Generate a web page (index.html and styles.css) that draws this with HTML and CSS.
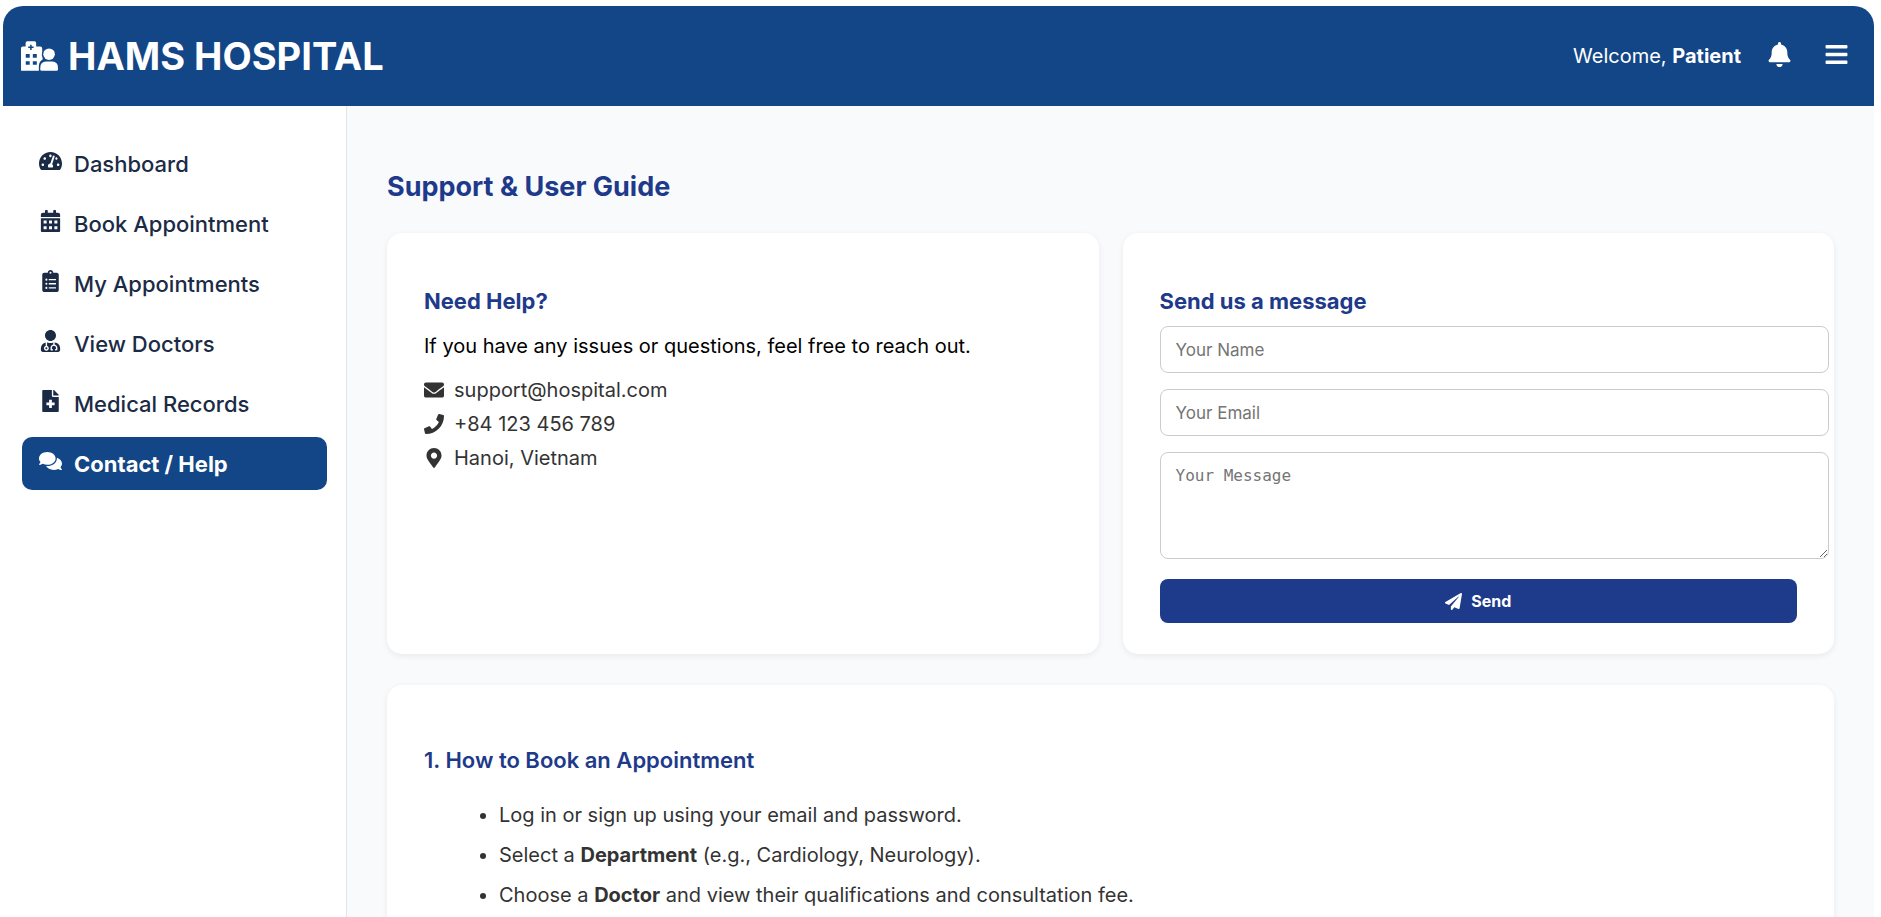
FILE: index.html
```html
<!DOCTYPE html>
<html lang="en">
<head>
<meta charset="utf-8">
<title>HAMS Hospital - Support</title>
<link rel="stylesheet" href="styles.css">
</head>
<body>
<header class="topbar">
  <h1 class="brand">
    <svg class="brand-icon" viewBox="0 0 576 460" aria-hidden="true"><path fill-rule="evenodd" d="M100 0H210Q236 0 236 26V84H300Q330 84 330 112V160Q312 220 340 280Q282 310 278 384V460H14Q0 460 0 446V108Q0 84 28 84H72V26Q72 0 100 0zM142 54V84H112V106H142V136H166V106H196V84H166V54zM74 200V258H136V200zM184 200V258H246V200zM74 310V368H136V310zM184 310V368H246V310z"/><circle cx="437" cy="202" r="90"/><path d="M390 316H486Q576 322 576 412V436Q576 460 552 460H324Q300 460 300 436V412Q300 322 390 316z"/></svg>
    <span>HAMS HOSPITAL</span>
  </h1>
  <div class="top-actions">
    <span class="welcome">Welcome, <strong>Patient</strong></span>
    <button class="icon-button" type="button" aria-label="Notifications"><svg class="top-icon" viewBox="0 0 448 512"><path d="M224 512c35.320 0 63.970-28.650 63.970-64H160.030c0 35.350 28.650 64 63.970 64zm215.390-149.710c-19.320-20.760-55.470-51.990-55.470-154.290 0-77.700-54.480-139.900-127.940-155.160V32c0-17.670-14.320-32-31.980-32s-31.980 14.330-31.980 32v20.840C118.560 68.100 64.080 130.300 64.080 208c0 102.300-36.150 133.530-55.470 154.290-6 6.450-8.660 14.160-8.610 21.710.110 16.400 12.980 32 32.100 32h383.800c19.120 0 32-15.600 32.100-32 .050-7.550-2.610-15.270-8.610-21.710z"/></svg></button>
    <button class="icon-button" type="button" aria-label="Menu"><svg class="top-icon" viewBox="0 0 448 512"><path d="M16 132h416c8.837 0 16-7.163 16-16V76c0-8.837-7.163-16-16-16H16C7.163 60 0 67.163 0 76v40c0 8.837 7.163 16 16 16zm0 160h416c8.837 0 16-7.163 16-16v-40c0-8.837-7.163-16-16-16H16c-8.837 0-16 7.163-16 16v40c0 8.837 7.163 16 16 16zm0 160h416c8.837 0 16-7.163 16-16v-40c0-8.837-7.163-16-16-16H16c-8.837 0-16 7.163-16 16v40c0 8.837 7.163 16 16 16z"/></svg></button>
  </div>
</header>
<div class="layout">
  <nav class="sidebar" aria-label="Main">
    <a class="nav-link" href="#"><svg class="nav-icon" viewBox="0 0 576 512" aria-hidden="true"><path d="M288 32C128.940 32 0 160.940 0 320c0 52.800 14.250 102.260 39.060 144.800 5.610 9.620 16.300 15.200 27.440 15.200h443c11.140 0 21.830-5.580 27.440-15.200C561.750 422.260 576 372.800 576 320c0-159.060-128.940-288-288-288zm0 64c14.710 0 26.580 10.130 30.320 23.650-1.110 2.260-2.640 4.230-3.450 6.670l-9.220 27.670c-5.130 3.490-10.970 6.010-17.640 6.010-17.670 0-32-14.330-32-32S270.330 96 288 96zM96 384c-17.670 0-32-14.330-32-32s14.330-32 32-32 32 14.330 32 32-14.330 32-32 32zm48-160c-17.670 0-32-14.330-32-32s14.330-32 32-32 32 14.330 32 32-14.330 32-32 32zm246.770-72.410l-61.330 184C343.130 347.330 352 364.540 352 384c0 11.720-3.380 22.550-8.880 32H232.880c-5.500-9.450-8.880-20.280-8.880-32 0-33.940 26.500-61.430 59.900-63.590l61.340-184.010c4.170-12.560 17.730-19.450 30.360-15.170 12.570 4.190 19.350 17.790 15.170 30.360zm14.660 57.200l15.520-46.550c3.470-1.290 7.130-2.230 11.050-2.230 17.670 0 32 14.330 32 32s-14.330 32-32 32c-11.380-.01-20.890-6.280-26.570-15.220zM480 384c-17.670 0-32-14.330-32-32s14.330-32 32-32 32 14.330 32 32-14.330 32-32 32z"/></svg>Dashboard</a>
    <a class="nav-link" href="#"><svg class="nav-icon" viewBox="0 0 448 512" aria-hidden="true"><path fill-rule="evenodd" d="M0 192H448V488Q448 512 424 512H24Q0 512 0 488zM64 246V314H134V246zM189 246V314H259V246zM314 246V314H384V246zM64 380V448H134V380zM189 380V448H259V380zM314 380V448H384V380zM400 64h-48V16c0-8.800-7.200-16-16-16h-32c-8.800 0-16 7.200-16 16v48H160V16c0-8.800-7.200-16-16-16h-32c-8.800 0-16 7.200-16 16v48H48C21.500 64 0 85.500 0 112v48h448v-48c0-26.500-21.500-48-48-48z"/></svg>Book Appointment</a>
    <a class="nav-link" href="#"><svg class="nav-icon" viewBox="0 0 384 512" aria-hidden="true"><path fill-rule="evenodd" d="M336 64H256C256 28.700 227.300 0 192 0S128 28.700 128 64H48C21.500 64 0 85.500 0 112V464C0 490.500 21.500 512 48 512H336C362.500 512 384 490.500 384 464V112C384 85.500 362.500 64 336 64zM192 40a24 24 0 1 1 0 48a24 24 0 1 1 0-48zM96 200a24 24 0 1 1 0 48a24 24 0 1 1 0-48zM96 296a24 24 0 1 1 0 48a24 24 0 1 1 0-48zM96 392a24 24 0 1 1 0 48a24 24 0 1 1 0-48zM152 208H320V240H152zM152 304H320V336H152zM152 400H320V432H152z"/></svg>My Appointments</a>
    <a class="nav-link" href="#"><svg class="nav-icon" viewBox="0 0 448 512" aria-hidden="true"><path d="M224 256c70.700 0 128-57.300 128-128S294.700 0 224 0 96 57.300 96 128s57.300 128 128 128zM104 424c0 13.300 10.700 24 24 24s24-10.700 24-24-10.700-24-24-24-24 10.700-24 24zm216-135.400v49c36.500 7.400 64 39.800 64 78.400v41.700c0 7.600-5.400 14.200-12.900 15.700l-32.200 6.400c-4.300.9-8.500-1.900-9.400-6.300l-3.100-15.700c-.9-4.300 1.900-8.600 6.300-9.400l19.300-3.900V416c0-62.800-96-65.100-96 1.900v26.700l19.300 3.900c4.300.9 7.100 5.100 6.300 9.400l-3.100 15.700c-.9 4.300-5.100 7.100-9.400 6.300l-31.200-4.200c-7.900-1.100-13.800-7.800-13.800-15.900V416c0-38.600 27.500-70.900 64-78.400v-45.200c-2.200.7-4.400 1.100-6.600 1.900-18 6.300-37.300 9.800-57.400 9.800s-39.400-3.500-57.400-9.800c-7.400-2.600-14.900-4.200-22.600-5.200v81.600c23.100 6.900 40 28.100 40 53.400 0 30.900-25.100 56-56 56s-56-25.100-56-56c0-25.300 16.900-46.500 40-53.400v-80.400C48.500 301 0 355.800 0 422.400v44.800C0 491.900 20.100 512 44.800 512h358.400c24.700 0 44.800-20.100 44.800-44.800v-44.800c0-72-56.800-130.300-128-133.800z"/></svg>View Doctors</a>
    <a class="nav-link" href="#"><svg class="nav-icon" viewBox="0 0 384 512" aria-hidden="true"><path d="M377 105L279.100 7c-4.500-4.500-10.600-7-17-7H256v128h128v-6.100c0-6.300-2.500-12.400-7-16.900zm-153 31V0H24C10.700 0 0 10.700 0 24v464c0 13.300 10.700 24 24 24h336c13.300 0 24-10.700 24-24V160H248c-13.200 0-24-10.800-24-24zm64 160v48c0 4.400-3.600 8-8 8h-56v56c0 4.400-3.600 8-8 8h-48c-4.400 0-8-3.600-8-8v-56h-56c-4.400 0-8-3.600-8-8v-48c0-4.400 3.600-8 8-8h56v-56c0-4.400 3.600-8 8-8h48c4.400 0 8 3.600 8 8v56h56c4.400 0 8 3.600 8 8z"/></svg>Medical Records</a>
    <a class="nav-link active" href="#" aria-current="page"><svg class="nav-icon" viewBox="0 0 576 512" aria-hidden="true"><path d="M416 192c0-88.400-93.100-160-208-160S0 103.600 0 192c0 34.300 14.100 65.900 38 92-13.400 30.200-35.500 54.200-35.800 54.500-2.200 2.300-2.800 5.700-1.500 8.700S4.800 352 8 352c36.600 0 66.900-12.300 88.700-25 32.200 15.700 70.300 25 111.300 25 114.900 0 208-71.600 208-160zm122 220c23.900-26 38-57.700 38-92 0-66.900-53.500-124.200-129.300-148.100.9 6.600 1.300 13.300 1.300 20.100 0 105.900-107.700 192-240 192-10.800 0-21.300-.8-31.700-1.900C207.800 439.600 281.800 480 368 480c41 0 79.100-9.200 111.300-25 21.800 12.700 52.100 25 88.700 25 3.200 0 6.100-1.900 7.300-4.800 1.300-2.900.7-6.300-1.500-8.700-.3-.3-22.400-24.200-35.800-54.500z"/></svg>Contact / Help</a>
  </nav>
  <main class="content">
    <h2 class="page-title">Support &amp; User Guide</h2>
    <div class="contact-grid">
      <section class="card">
        <h3 class="card-title">Need Help?</h3>
        <p class="intro">If you have any issues or questions, feel free to reach out.</p>
        <ul class="contact-list">
          <li class="contact-item"><svg class="contact-icon" viewBox="0 0 512 512" aria-hidden="true"><path d="M502.300 190.800c3.900-3.100 9.700-.2 9.700 4.700V400c0 26.500-21.500 48-48 48H48c-26.500 0-48-21.500-48-48V195.600c0-5 5.700-7.800 9.700-4.700 22.400 17.400 52.100 39.500 154.100 113.600 21.100 15.400 56.700 47.800 92.200 47.600 35.700.3 72-32.800 92.300-47.600 102-74.100 131.600-96.300 154-113.700zM256 320c23.200.4 56.600-29.200 73.400-41.400 132.700-96.300 142.800-104.700 173.400-128.700 5.800-4.500 9.200-11.500 9.200-18.900v-19c0-26.500-21.500-48-48-48H48c-26.500 0-48 21.500-48 48v19c0 7.400 3.400 14.300 9.200 18.900 30.600 23.900 40.700 32.400 173.400 128.700 16.800 12.200 50.200 41.800 73.400 41.400z"/></svg>support@hospital.com</li>
          <li class="contact-item"><svg class="contact-icon" viewBox="0 0 512 512" aria-hidden="true"><path d="M493.400 24.600l-104-24c-11.300-2.600-22.900 3.300-27.500 13.900l-48 112c-4.200 9.800-1.400 21.300 6.900 28l60.600 49.600c-36 76.700-98.900 140.500-177.200 177.200l-49.600-60.600c-6.800-8.300-18.200-11.100-28-6.900l-112 48C3.900 366.500-2 378.100.6 389.400l24 104C27.100 504.200 36.700 512 48 512c256.100 0 464-207.500 464-464 0-11.200-7.700-20.900-18.600-23.400z"/></svg>+84 123 456 789</li>
          <li class="contact-item"><svg class="contact-icon" viewBox="0 0 384 512" aria-hidden="true"><path d="M172.268 501.670C26.970 291.031 0 269.413 0 192 0 85.961 85.961 0 192 0s192 85.961 192 192c0 77.413-26.970 99.031-172.268 309.670-9.535 13.774-29.930 13.773-39.464 0zM192 272c44.183 0 80-35.817 80-80s-35.817-80-80-80-80 35.817-80 80 35.817 80 80 80z"/></svg>Hanoi, Vietnam</li>
        </ul>
      </section>
      <section class="card">
        <h3 class="card-title">Send us a message</h3>
        <form class="message-form">
          <input class="field" type="text" placeholder="Your Name" aria-label="Your Name">
          <input class="field" type="email" placeholder="Your Email" aria-label="Your Email">
          <textarea class="field message" placeholder="Your Message" aria-label="Your Message"></textarea>
          <button class="send" type="submit"><svg class="send-icon" viewBox="0 0 512 512" aria-hidden="true"><path d="M476 3.200L12.500 270.600c-18.100 10.400-15.800 35.600 2.200 43.200L121 358.400l287.300-253.200c5.500-4.900 13.300 2.600 8.600 8.300L176 407v80.500c0 23.600 28.500 32.900 42.500 15.800L282 426l124.600 52.200c14.200 6 30.400-2.900 33-18.200l72-432C515 7.800 493.300-6.800 476 3.200z"/></svg>Send</button>
        </form>
      </section>
    </div>
    <section class="card">
      <h3 class="guide-title">1. How to Book an Appointment</h3>
      <ul class="guide-list">
        <li>Log in or sign up using your email and password.</li>
        <li>Select a <strong>Department</strong> (e.g., Cardiology, Neurology).</li>
        <li>Choose a <strong>Doctor</strong> and view their qualifications and consultation fee.</li>
      </ul>
    </section>
  </main>
</div>
</body>
</html>
```
FILE: styles.css
```css
body {
  margin: 6px 7px 0 3px;
  background: #fff;
  font-family: Inter, "Liberation Sans", sans-serif;
  font-size: 20px;
}

.topbar {
  display: flex;
  justify-content: space-between;
  align-items: center;
  padding: 25px 26px 25px 18px;
  border-radius: 20px 20px 0 0;
  background: #134686;
  color: #fff;
}

.brand {
  display: flex;
  gap: 10px;
  align-items: center;
  margin: 0;
  font-size: 38px;
  line-height: 50px;
}

.brand-icon {
  width: 37px;
  height: 30px;
  fill: currentColor;
}

.top-actions {
  display: flex;
  gap: 34px;
  align-items: center;
}

.welcome { margin-right: -7px; }

.icon-button {
  display: flex;
  padding: 0 0 4px;
  border: 0;
  background: none;
  color: inherit;
}

.top-icon {
  width: 23px;
  height: 25px;
  fill: currentColor;
}

.layout {
  display: grid;
  grid-template-columns: 344px minmax(0, 1fr);
}

.sidebar {
  display: flex;
  flex-direction: column;
  gap: 7px;
  padding: 31px 19px;
  border-right: 1px solid #e2e5ec;
}

.nav-link {
  display: flex;
  gap: 12px;
  align-items: center;
  padding: 13px 17px 11px;
  border-radius: 10px;
  color: #1c2b45;
  font-size: 22px;
  font-weight: 500;
  line-height: 29px;
  text-decoration: none;
}

.nav-icon {
  width: 23px;
  height: 22px;
  margin-bottom: 7px;
  fill: currentColor;
}

.active {
  background: #134686;
  color: #fff;
  font-weight: 700;
}

.content {
  padding: 61px 40px 40px;
  background: #f9fafc;
}

.page-title {
  margin: 0 0 26px;
  color: #1e3a8a;
  font-size: 27px;
  line-height: 40px;
}

.contact-grid {
  display: grid;
  grid-template-columns: 1fr 1fr;
  gap: 24px;
  margin-bottom: 31px;
}

.card {
  padding: 52px 37px 31px;
  border-radius: 15px;
  background: #fff;
  box-shadow: 0 2px 6px rgba(0, 0, 0, 0.07);
}

.card-title,
.guide-title {
  margin: 0;
  color: #1e3a8a;
  font-size: 22px;
  line-height: 32px;
}

.guide-title {
  padding-top: 7px;
  font-weight: 600;
}

.intro {
  margin: 14px 0 12px;
  color: #000;
  line-height: 30px;
}

.contact-list {
  margin: 0;
  padding: 0;
  list-style: none;
}

.contact-item {
  display: flex;
  gap: 10px;
  align-items: center;
  color: #333;
  line-height: 34px;
}

.contact-icon {
  width: 20px;
  height: 20px;
  fill: currentColor;
}

.message-form {
  display: flex;
  flex-direction: column;
  gap: 16px;
  align-items: stretch;
  padding-top: 9px;
}

.field {
  box-sizing: border-box;
  height: 47px;
  margin-right: -32px;
  padding: 12px 15px;
  border: 1px solid #ccc;
  border-radius: 8px;
  font-family: inherit;
  font-size: 17px;
  line-height: 21px;
}

.message {
  height: 107px;
  font-family: "DejaVu Sans Mono", monospace;
  font-size: 16px;
  resize: vertical;
}

.send {
  display: flex;
  gap: 9px;
  justify-content: center;
  align-items: center;
  margin-top: 4px;
  padding: 11px;
  border: 0;
  border-radius: 8px;
  background: #1e3a8a;
  color: #fff;
  font: 700 16px/22px Inter, "Liberation Sans", sans-serif;
}

.send-icon {
  width: 17px;
  height: 17px;
  fill: currentColor;
}

.guide-list {
  margin: 19px 0 0;
  padding-left: 75px;
  color: #333;
  line-height: 40px;
}
```
